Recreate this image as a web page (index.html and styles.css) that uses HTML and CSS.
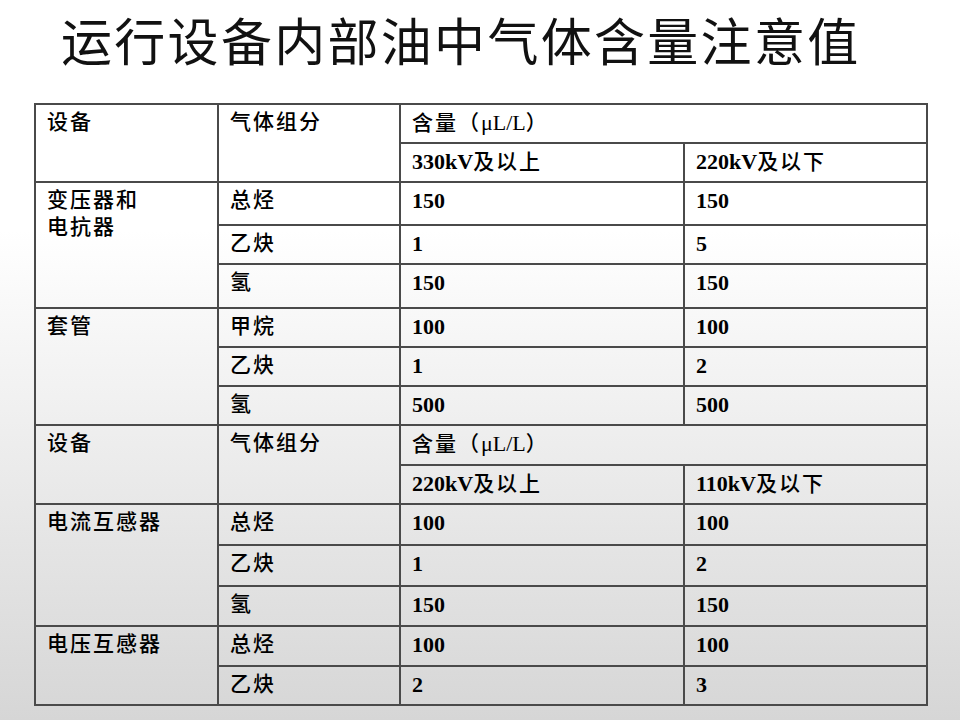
FILE: index.html
```html
<!DOCTYPE html>
<html lang="zh-CN">
<head>
<meta charset="utf-8">
<title>运行设备内部油中气体含量注意值</title>
<link rel="stylesheet" href="styles.css">
</head>
<body>
<div class="slide">
  <h1 class="title">运行设备内部油中气体含量注意值</h1>
  <table class="grid">
    <colgroup>
      <col class="c1"><col class="c2"><col class="c3"><col class="c4">
    </colgroup>
    <tbody>
      <tr class="h39"><td rowspan="2">设备</td><td rowspan="2">气体组分</td><td colspan="2">含量（<span class="unit">μL/L</span>）</td></tr>
      <tr class="h39"><td><span class="num">330kV</span>及以上</td><td><span class="num">220kV</span>及以下</td></tr>
      <tr class="h43"><td rowspan="3" class="two">变压器和<br>电抗器</td><td>总烃</td><td class="num">150</td><td class="num">150</td></tr>
      <tr class="h39"><td>乙炔</td><td class="num">1</td><td class="num">5</td></tr>
      <tr class="h44"><td>氢</td><td class="num">150</td><td class="num">150</td></tr>
      <tr class="h39"><td rowspan="3">套管</td><td>甲烷</td><td class="num">100</td><td class="num">100</td></tr>
      <tr class="h39"><td>乙炔</td><td class="num">1</td><td class="num">2</td></tr>
      <tr class="h39"><td>氢</td><td class="num">500</td><td class="num">500</td></tr>
      <tr class="h40"><td rowspan="2">设备</td><td rowspan="2">气体组分</td><td colspan="2">含量（<span class="unit">μL/L</span>）</td></tr>
      <tr class="h39"><td><span class="num">220kV</span>及以上</td><td><span class="num">110kV</span>及以下</td></tr>
      <tr class="h41"><td rowspan="3">电流互感器</td><td>总烃</td><td class="num">100</td><td class="num">100</td></tr>
      <tr class="h41"><td>乙炔</td><td class="num">1</td><td class="num">2</td></tr>
      <tr class="h40"><td>氢</td><td class="num">150</td><td class="num">150</td></tr>
      <tr class="h40"><td rowspan="2">电压互感器</td><td>总烃</td><td class="num">100</td><td class="num">100</td></tr>
      <tr class="h39"><td>乙炔</td><td class="num">2</td><td class="num">3</td></tr>
    </tbody>
  </table>
</div>
</body>
</html>
```
FILE: styles.css
```css
html, body {
  margin: 0;
  padding: 0;
}
body {
  width: 960px;
  height: 720px;
  overflow: hidden;
  background: linear-gradient(to bottom, #ffffff 0%, #ffffff 32%, #ebebeb 65%, #d6d6d6 100%);
  font-family: "Noto Sans CJK SC", sans-serif;
  color: #111;
}
.slide {
  width: 960px;
  height: 720px;
  padding: 0;
}
.title {
  margin: 0;
  padding: 9px 0 0 61px;
  height: 94px;
  box-sizing: border-box;
  font-family: "Noto Sans CJK SC", sans-serif;
  font-weight: 400;
  font-size: 51px;
  line-height: 60px;
  letter-spacing: 2.3px;
  color: #111;
  white-space: nowrap;
}
.grid {
  border-collapse: collapse;
  margin-left: 34px;
  margin-top: 9px;
  table-layout: fixed;
  width: 892px;
}
.c1 { width: 183px; }
.c2 { width: 182px; }
.c3 { width: 284px; }
.c4 { width: 243px; }
.grid td {
  border: 2px solid #4a4a4a;
  vertical-align: top;
  padding: 4px 0 0 11px;
  font-family: "Liberation Serif", "Noto Sans CJK SC", serif;
  font-weight: 500;
  font-size: 21px;
  line-height: 27px;
  letter-spacing: 2px;
  color: #000;
  box-sizing: border-box;
  white-space: nowrap;
}
.h39 { height: 39px; }
.h40 { height: 40px; }
.h41 { height: 41px; }
.h43 { height: 43px; }
.h44 { height: 44px; }
.grid .num {
  font-family: "Liberation Serif", serif;
  font-weight: 700;
  font-size: 22px;
  letter-spacing: 0;
}
.grid .unit {
  font-family: "Liberation Serif", serif;
  font-weight: 400;
  font-size: 22px;
  letter-spacing: 0;
}
```
